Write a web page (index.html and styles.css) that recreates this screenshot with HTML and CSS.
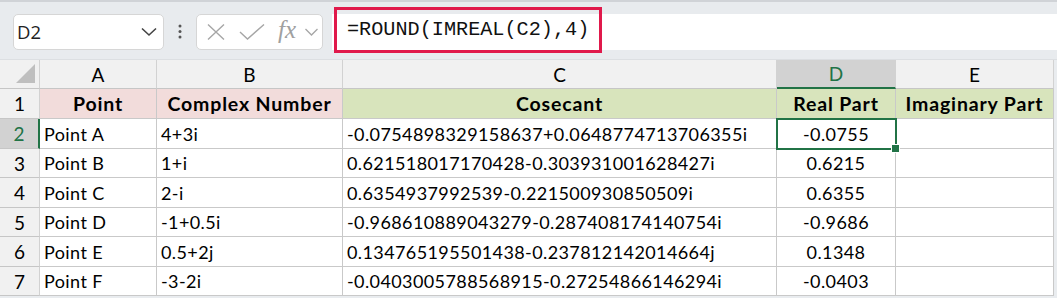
FILE: index.html
```html
<!DOCTYPE html>
<html lang="en">
<head>
    <meta charset="UTF-8">
    <title>Real Part</title>
    <link rel="stylesheet" href="styles.css">
</head>
<body>
    <!-- Formula bar -->
    <div class="toolbar">
        <div class="namebox">
            <span>D2</span>
            <svg class="chev" width="16" height="10" viewBox="0 0 16 10"><path d="M1 1.5 L8 8 L15 1.5" fill="none" stroke="#444" stroke-width="1.6"/></svg>
        </div>
        <div class="dots">
            <svg width="6" height="16" viewBox="0 0 6 16"><circle cx="3" cy="2" r="1.5"/><circle cx="3" cy="7.5" r="1.5"/><circle cx="3" cy="13" r="1.5"/></svg>
        </div>
        <div class="fxbox">
            <svg width="18" height="16" viewBox="0 0 18 16"><path d="M1 0.5 L17 15.5 M17 0.5 L1 15.5" stroke="#a6a6a6" stroke-width="1.4" fill="none"/></svg>
            <svg width="26" height="16" viewBox="0 0 26 16"><path d="M1 8 L8.5 15 L25 0.5" stroke="#a6a6a6" stroke-width="1.4" fill="none"/></svg>
            <span class="fx">fx</span>
            <svg width="13" height="8" viewBox="0 0 13 8"><path d="M0.5 1 L6.5 7 L12.5 1" fill="none" stroke="#a6a6a6" stroke-width="1.3"/></svg>
        </div>
        <div class="formula">
            <div class="formula-text">=ROUND(IMREAL(C2),4)</div>
        </div>
    </div>

    <!-- Sheet -->
    <div class="sheet">
        <div class="corner"><div class="tri"></div></div>
        <div class="colhead">A</div>
        <div class="colhead">B</div>
        <div class="colhead">C</div>
        <div class="colhead active">D</div>
        <div class="colhead">E</div>
        <div class="edge"></div>

        <div class="rowhead">1</div>
        <div class="cell hdr pink">Point</div>
        <div class="cell hdr pink">Complex Number</div>
        <div class="cell hdr green">Cosecant</div>
        <div class="cell hdr green">Real Part</div>
        <div class="cell hdr green">Imaginary Part</div>
        <div class="edge"></div>

        <div class="rowhead active">2</div>
        <div class="cell">Point A</div>
        <div class="cell">4+3i</div>
        <div class="cell">-0.0754898329158637+0.0648774713706355i</div>
        <div class="cell num selected">-0.0755<span class="handle"></span></div>
        <div class="cell"></div>
        <div class="edge"></div>

        <div class="rowhead">3</div>
        <div class="cell">Point B</div>
        <div class="cell">1+i</div>
        <div class="cell">0.621518017170428-0.303931001628427i</div>
        <div class="cell num">0.6215</div>
        <div class="cell"></div>
        <div class="edge"></div>

        <div class="rowhead">4</div>
        <div class="cell">Point C</div>
        <div class="cell">2-i</div>
        <div class="cell">0.6354937992539-0.221500930850509i</div>
        <div class="cell num">0.6355</div>
        <div class="cell"></div>
        <div class="edge"></div>

        <div class="rowhead">5</div>
        <div class="cell">Point D</div>
        <div class="cell">-1+0.5i</div>
        <div class="cell">-0.968610889043279-0.287408174140754i</div>
        <div class="cell num">-0.9686</div>
        <div class="cell"></div>
        <div class="edge"></div>

        <div class="rowhead">6</div>
        <div class="cell">Point E</div>
        <div class="cell">0.5+2j</div>
        <div class="cell">0.134765195501438-0.237812142014664j</div>
        <div class="cell num">0.1348</div>
        <div class="cell"></div>
        <div class="edge"></div>

        <div class="rowhead">7</div>
        <div class="cell">Point F</div>
        <div class="cell">-3-2i</div>
        <div class="cell">-0.0403005788568915-0.27254866146294i</div>
        <div class="cell num">-0.0403</div>
        <div class="cell"></div>
        <div class="edge"></div>
    </div>
</body>
</html>
```

FILE: styles.css
```css
body {
    margin: 0;
    width: 1057px;
    height: 298px;
    overflow: hidden;
    background: #e9ecef;
    font-family: "Lato", "Open Sans", sans-serif;
}
.toolbar {
    display: flex;
    align-items: center;
    height: 60px;
    box-sizing: border-box;
    padding: 13px 0 11px 13px;
    border-top: 2px solid #d0d3d7;
    background: #e8ebee;
    border-bottom: 1px solid #dcdfe2;
}
.namebox {
    display: flex;
    align-items: center;
    justify-content: space-between;
    width: 151px;
    height: 36px;
    box-sizing: border-box;
    padding: 0 6px 0 3px;
    background: #fff;
    border: 1px solid #d6d6d6;
    border-radius: 5px;
    font-family: "Open Sans", sans-serif;
    font-size: 18.5px;
    color: #222;
}
.dots {
    width: 32px;
    display: flex;
    justify-content: center;
    fill: #555;
}
.fxbox {
    display: flex;
    align-items: center;
    width: 127px;
    height: 36px;
    box-sizing: border-box;
    padding: 0 4px 0 10px;
    gap: 14px;
    background: #fff;
    border: 1px solid #d6d6d6;
    border-radius: 5px;
}
.fxbox .fx {
    font-family: "Liberation Serif", serif;
    font-style: italic;
    font-size: 25px;
    color: #a0a0a0;
    margin-left: -1px;
    margin-right: -5px;
    margin-top: -3px;
}
.formula {
    position: relative;
    flex: 1;
    height: 36px;
    margin-left: 9px;
    background: #fff;
}
.formula-text {
    position: absolute;
    left: 2px;
    top: -7px;
    width: 252px;
    height: 40px;
    border: 3px solid #e0194b;
    padding-left: 10px;
    line-height: 40px;
    font-family: "Liberation Mono", monospace;
    font-size: 20.2px;
    color: #111;
}
.sheet {
    display: grid;
    grid-template-columns: 40px 117px 186px 434px 119px 158px 3px;
    grid-template-rows: 29px 30px 30px 29px 30px 29px 30px 29px;
    font-size: 18px;
    letter-spacing: 0.4px;
    color: #000;
}
.corner, .colhead, .rowhead {
    background: #f1f1f1;
    box-sizing: border-box;
    border-right: 1px solid #d2d2d2;
    border-bottom: 1px solid #c6c6c6;
    font-size: 19px;
    letter-spacing: 0;
}
.corner {
    position: relative;
}
.tri {
    position: absolute;
    right: 4px;
    bottom: 5px;
    width: 0;
    height: 0;
    border-left: 19px solid transparent;
    border-bottom: 19px solid #bfbfbf;
}
.colhead {
    display: flex;
    align-items: center;
    justify-content: center;
}
.colhead.active {
    background: #d2d2d2;
    color: #217346;
    border-bottom: 2px solid #217346;
}
.rowhead {
    display: flex;
    align-items: center;
    justify-content: center;
}
.rowhead.active {
    background: #d2d2d2;
    color: #217346;
    border-right: 2px solid #217346;
}
.edge {
    background: #e9ecef;
}
.cell {
    position: relative;
    display: flex;
    align-items: center;
    padding-left: 4px;
    box-sizing: border-box;
    background: #fff;
    border-right: 1px solid #c9c9c9;
    border-bottom: 1px solid #c9c9c9;
    white-space: nowrap;
}
.cell.hdr {
    justify-content: center;
    padding-left: 0;
    font-weight: bold;
    font-size: 19.5px;
    letter-spacing: 0.85px;
}
.pink {
    background: #f2dcdb;
}
.green {
    background: #d8e4bc;
}
.cell.num {
    justify-content: center;
    padding-left: 0;
}
.cell.selected {
    z-index: 2;
    outline: 2px solid #217346;
    outline-offset: -1px;
}
.handle {
    position: absolute;
    right: -5px;
    bottom: -5px;
    width: 7px;
    height: 7px;
    background: #217346;
    border: 1px solid #fff;
}
```
